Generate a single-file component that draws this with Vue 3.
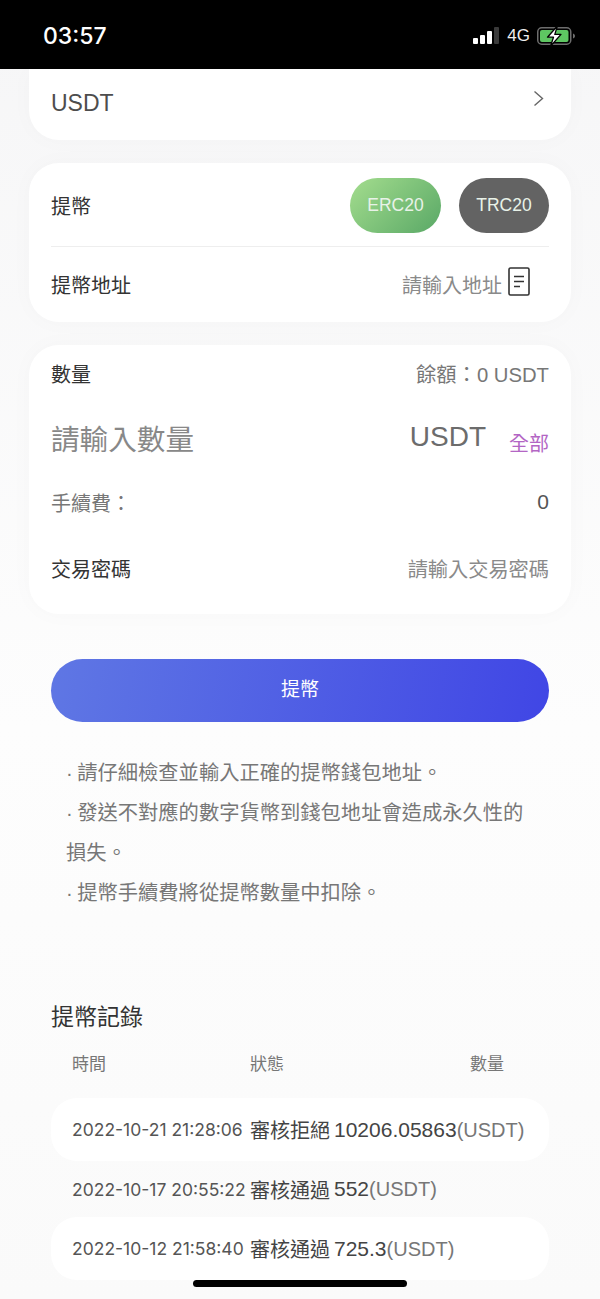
<template>
  <div class="page">
    <header class="status-bar">
      <span class="time">03:57</span>
      <div class="status-icons">
        <svg width="26" height="18" viewBox="0 0 26 18">
          <rect x="0" y="11" width="5" height="6" rx="1" fill="#fff" />
          <rect x="7" y="8" width="5" height="9" rx="1" fill="#fff" />
          <rect x="14" y="4" width="5" height="13" rx="1" fill="#fff" />
          <rect x="21" y="0" width="5" height="17" rx="1" fill="#3a3a3a" />
        </svg>
        <span class="net">4G</span>
        <svg width="38" height="22" viewBox="0 0 38 22">
          <rect x="0.75" y="2.75" width="33" height="16.5" rx="4" fill="none" stroke="#6d6d6d" stroke-width="1.5" />
          <rect x="3" y="5" width="28.5" height="12" rx="2" fill="#5ec662" />
          <path d="M36 8.5c1.4.4 2 1.4 2 2.5s-.6 2.1-2 2.5z" fill="#6d6d6d" />
          <path d="M20.5 0.8 10.5 12.2h6L13.5 21.2 24 9.4h-6.2z" fill="#fff" stroke="#000" stroke-width="1.3" stroke-linejoin="round" />
        </svg>
      </div>
    </header>

    <main class="content">
      <section class="card coin-card">
        <span class="coin">USDT</span>
        <svg class="chevron" width="12" height="18" viewBox="0 0 12 18">
          <path d="M1.5 1.5 9.5 8.5 1.5 15.5" fill="none" stroke="#666" stroke-width="1.4" />
        </svg>
      </section>

      <section class="card chain-card">
        <div class="chain-row">
          <span class="label">提幣</span>
          <div class="chains">
            <span class="chain erc">ERC20</span>
            <span class="chain trc">TRC20</span>
          </div>
        </div>
        <div class="address-row">
          <span class="label">提幣地址</span>
          <div class="address-right">
            <span class="hint">請輸入地址</span>
            <svg width="22" height="30" viewBox="0 0 22 30">
              <rect x="1" y="1" width="20" height="27" rx="1.5" fill="none" stroke="#333" stroke-width="1.6" />
              <path d="M6 9.5h10M6 14.5h10M6 19.5h6" stroke="#333" stroke-width="1.6" />
            </svg>
          </div>
        </div>
      </section>

      <section class="card amount-card">
        <div class="row top-row">
          <span class="label">數量</span>
          <span class="balance">餘額：0 USDT</span>
        </div>
        <div class="row input-row">
          <span class="amount-hint">請輸入數量</span>
          <div class="amount-right">
            <span class="unit">USDT</span>
            <span class="all">全部</span>
          </div>
        </div>
        <div class="row fee-row">
          <span class="fee">手續費：</span>
          <span class="fee-value">0</span>
        </div>
        <div class="row pwd-row">
          <span class="label">交易密碼</span>
          <span class="hint">請輸入交易密碼</span>
        </div>
      </section>

      <button class="submit">提幣</button>

      <div class="notes">
        <p>· 請仔細檢查並輸入正確的提幣錢包地址。</p>
        <p>· 發送不對應的數字貨幣到錢包地址會造成永久性的損失。</p>
        <p>· 提幣手續費將從提幣數量中扣除。</p>
      </div>

      <h2 class="records-title">提幣記錄</h2>
      <div class="records-head">
        <span class="col-time">時間</span>
        <span class="col-status">狀態</span>
        <span class="col-amount">數量</span>
      </div>
      <div
        v-for="(item, i) in records"
        :key="item.time"
        :class="['record', { striped: i % 2 === 0 }]"
      >
        <span class="rec-time">{{ item.time }}</span>
        <span class="rec-status">{{ item.status }}</span>
        <span class="rec-amount">{{ item.amount }}<em>(USDT)</em></span>
      </div>
    </main>

    <div class="home-bar"></div>
  </div>
</template>

<script setup>
const records = [
  { time: '2022-10-21 21:28:06', status: '審核拒絕', amount: '10206.05863' },
  { time: '2022-10-17 20:55:22', status: '審核通過', amount: '552' },
  { time: '2022-10-12 21:58:40', status: '審核通過', amount: '725.3' },
]
</script>

<style>
html,
body {
  margin: 0;
  background: #fafafa;
}
</style>

<style scoped>
.page {
  position: relative;
  width: 600px;
  height: 1299px;
  overflow: hidden;
  background: linear-gradient(#f6f6f7, #fdfdfd 56%, #fafafa);
  font-family: "Liberation Sans", "Noto Sans CJK TC", sans-serif;
  color: #333;
}

.status-bar {
  height: 69px;
  background: #000;
  display: flex;
  align-items: center;
  justify-content: space-between;
  padding: 3px 25px 0 43px;
  box-sizing: border-box;
}

.time {
  color: #fff;
  font-family: Inter, "Liberation Sans", sans-serif;
  font-size: 23px;
  font-weight: 500;
}

.status-icons {
  display: flex;
  align-items: center;
}

.net {
  color: #eee;
  font-size: 17px;
  margin: 0 7px 0 8px;
}

.content {
  padding: 0 29px;
}

.card {
  background: #fff;
  border-radius: 30px;
  box-shadow: 0 0 24px rgba(0, 0, 0, 0.025);
  padding: 0 22px;
}

.coin-card {
  height: 71px;
  border-radius: 0 0 30px 30px;
  display: flex;
  justify-content: space-between;
  margin-bottom: 23px;
}

.coin {
  font-size: 23px;
  color: #4d4d4d;
  line-height: 68px;
}

.chevron {
  margin: 21px 4px 0 0;
}

.label {
  font-size: 20px;
  color: #333;
}

.hint {
  font-size: 20px;
  color: #8a8a8a;
}

.chain-card {
  height: 159px;
  margin-bottom: 23px;
}

.chain-row {
  height: 84px;
  box-sizing: border-box;
  padding-top: 1px;
  border-bottom: 1px solid #eee;
  display: flex;
  align-items: center;
  justify-content: space-between;
}

.chains {
  display: flex;
  gap: 18px;
}

.chain {
  width: 91px;
  height: 55px;
  border-radius: 28px;
  color: #e8f2e8;
  font-size: 17.5px;
  display: flex;
  align-items: center;
  justify-content: center;
}

.erc {
  background: linear-gradient(135deg, #a4dd8e, #59a866);
}

.trc {
  width: 90px;
  background: #636363;
}

.address-row {
  height: 75px;
  display: flex;
  align-items: center;
  justify-content: space-between;
}

.address-right {
  display: flex;
  align-items: center;
  gap: 6px;
  margin-right: 19px;
}

.address-right svg {
  margin-bottom: 6px;
}

.amount-card {
  height: 269px;
  margin-bottom: 45px;
}

.row {
  display: flex;
  align-items: center;
  justify-content: space-between;
}

.top-row {
  height: 56px;
}

.balance {
  font-size: 20.3px;
  color: #777;
}

.input-row {
  height: 72px;
}

.amount-hint {
  font-size: 28.6px;
  color: #888;
}

.amount-right {
  display: flex;
  align-items: center;
  gap: 23px;
}

.unit {
  font-size: 28px;
  color: #6c6c6c;
  line-height: 36px;
}

.all {
  font-size: 20px;
  color: #b366c4;
  line-height: 28px;
  margin-top: 14px;
}

.fee-row {
  height: 58px;
}

.fee {
  font-size: 20px;
  color: #777;
}

.fee-value {
  font-size: 21px;
  color: #555;
}

.pwd-row {
  height: 74px;
}

.pwd-row .hint {
  font-size: 20.2px;
}

.submit {
  display: block;
  width: 498px;
  height: 63px;
  margin: 0 22px;
  padding: 0 0 6px;
  border: 0;
  border-radius: 32px;
  background: linear-gradient(100deg, #5f77e4, #4046e5);
  color: #fff;
  font-family: inherit;
  font-size: 19px;
}

.notes {
  margin: 31px 22px 0;
  padding: 0 15px;
  height: 246px;
  font-size: 20.3px;
  line-height: 40px;
  word-spacing: -1.2px;
  color: #777;
}

.notes p {
  margin: 0;
  width: 460px;
}

.records-title {
  margin: 0 22px;
  font-size: 23px;
  font-weight: 400;
  line-height: 36px;
  color: #333;
}

.records-head {
  display: flex;
  margin: 17px 22px 0;
  padding: 0 21px;
  font-size: 17px;
  line-height: 26px;
  color: #777;
  height: 46px;
}

.col-time {
  width: 178px;
}

.col-status {
  width: 220px;
}

.record {
  margin: 0 22px;
  padding: 0 21px;
  height: 56px;
  display: flex;
  align-items: center;
  white-space: nowrap;
}

.record.striped {
  height: 63px;
  background: #fff;
  border-radius: 26px;
}

.rec-time {
  width: 178px;
  font-family: Inter, "Liberation Sans", sans-serif;
  font-size: 17.5px;
  color: #555;
}

.rec-status {
  font-size: 20px;
  width: 84px;
  color: #444;
}

.rec-amount {
  font-size: 21px;
  color: #444;
}

.rec-amount em {
  font-size: 20px;
  font-style: normal;
  color: #777;
}

.home-bar {
  position: absolute;
  left: 193px;
  bottom: 12px;
  width: 214px;
  height: 7px;
  border-radius: 4px;
  background: #000;
}
</style>
